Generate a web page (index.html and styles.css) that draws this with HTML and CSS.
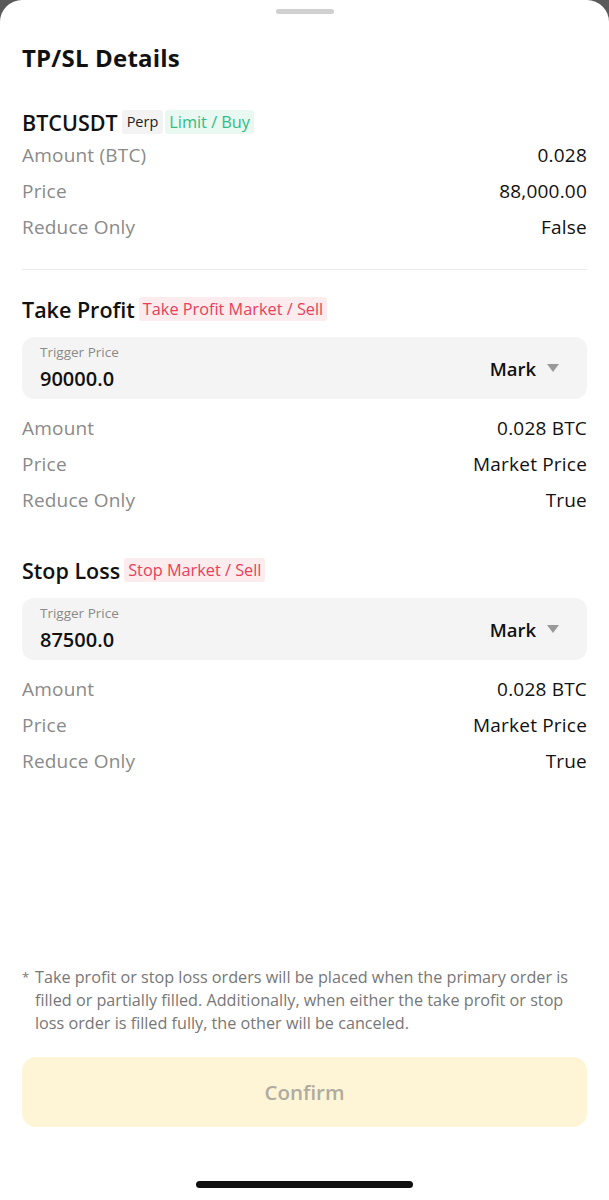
FILE: index.html
```html
<!DOCTYPE html>
<html>
<head>
<title>TP/SL Details</title>
<link rel="stylesheet" href="styles.css">
</head>
<body>
<div class="sheet">
  <div class="handle"></div>
  <h1 class="title">TP/SL Details</h1>

  <div class="section first">
    <div class="head">
      <span class="name">BTCUSDT</span>
      <span class="tag tag-gray">Perp</span>
      <span class="tag tag-green">Limit / Buy</span>
    </div>
    <div class="row"><span class="label">Amount (BTC)</span><span class="value">0.028</span></div>
    <div class="row"><span class="label">Price</span><span class="value">88,000.00</span></div>
    <div class="row"><span class="label">Reduce Only</span><span class="value">False</span></div>
  </div>

  <div class="divider"></div>

  <div class="section">
    <div class="head">
      <span class="name">Take Profit</span>
      <span class="tag tag-red">Take Profit Market / Sell</span>
    </div>
    <div class="trigger">
      <div class="trigger-left">
        <span class="trigger-label">Trigger Price</span>
        <span class="trigger-value">90000.0</span>
      </div>
      <div class="mark">Mark <span class="caret"></span></div>
    </div>
    <div class="row"><span class="label">Amount</span><span class="value">0.028 BTC</span></div>
    <div class="row"><span class="label">Price</span><span class="value">Market Price</span></div>
    <div class="row"><span class="label">Reduce Only</span><span class="value">True</span></div>
  </div>

  <div class="section stop">
    <div class="head">
      <span class="name">Stop Loss</span>
      <span class="tag tag-red">Stop Market / Sell</span>
    </div>
    <div class="trigger">
      <div class="trigger-left">
        <span class="trigger-label">Trigger Price</span>
        <span class="trigger-value">87500.0</span>
      </div>
      <div class="mark">Mark <span class="caret"></span></div>
    </div>
    <div class="row"><span class="label">Amount</span><span class="value">0.028 BTC</span></div>
    <div class="row"><span class="label">Price</span><span class="value">Market Price</span></div>
    <div class="row"><span class="label">Reduce Only</span><span class="value">True</span></div>
  </div>

  <div class="spacer"></div>

  <div class="note">
    <span class="star">*</span>
    <p>Take profit or stop loss orders will be placed when the primary order is filled or partially filled. Additionally, when either the take profit or stop loss order is filled fully, the other will be canceled.</p>
  </div>

  <button class="confirm">Confirm</button>
  <div class="home"></div>
</div>
</body>
</html>
```

FILE: styles.css
```css
body {
    margin: 0;
    padding: 0;
    background: #5a5a5a;
    font-family: "Open Sans", Lato, sans-serif;
}

.sheet {
    width: 609px;
    height: 1200px;
    background: #fff;
    border-radius: 22px 22px 0 0;
    display: flex;
    flex-direction: column;
    padding: 0 22px;
    box-sizing: border-box;
}

.handle {
    width: 58px;
    height: 5px;
    border-radius: 3px;
    background: #d0d0d0;
    margin: 9px auto 0;
}

.title {
    margin: 29px 0 0;
    font-size: 24px;
    font-weight: 700;
    color: #111;
    line-height: 30px;
    letter-spacing: 0.2px;
}

.section {
    margin-top: 24px;
}

.first {
    margin-top: 34px;
}

.stop {
    margin-top: 37px;
}

.head {
    display: flex;
    align-items: center;
    height: 30px;
}

.name {
    font-size: 21.5px;
    font-weight: 600;
    color: #111;
    margin-right: 4px;
}

.tag {
    font-size: 16.3px;
    padding: 1px 4px;
    border-radius: 3px;
    margin-right: 2px;
    line-height: 22px;
}

.tag-gray {
    background: #f3f3f3;
    color: #222;
    font-size: 14.5px;
    padding: 1px 5px;
}

.tag-green {
    background: #eaf8f2;
    color: #2fbd85;
}

.tag-red {
    background: #fdecee;
    color: #ea3e5b;
}

.row {
    display: flex;
    justify-content: space-between;
    align-items: center;
    height: 36px;
    font-size: 19px;
    letter-spacing: 0.2px;
}

.label {
    color: #8a8a8a;
}

.value {
    color: #111;
}

.divider {
    height: 1px;
    background: #ebebeb;
    margin-top: 24px;
}

.trigger {
    display: flex;
    justify-content: space-between;
    align-items: center;
    background: #f4f4f4;
    border-radius: 12px;
    height: 62px;
    padding: 0 28px 0 18px;
    margin: 13px 0 11px;
}

.trigger-left {
    display: flex;
    flex-direction: column;
}

.trigger-label {
    font-size: 13.5px;
    color: #8a8a8a;
    line-height: 16px;
}

.trigger-value {
    font-size: 20px;
    font-weight: 600;
    color: #111;
    line-height: 26px;
    margin-top: 6px;
}

.mark {
    display: flex;
    align-items: center;
    font-size: 18.5px;
    font-weight: 600;
    color: #111;
}

.caret {
    width: 0;
    height: 0;
    border-left: 6px solid transparent;
    border-right: 6px solid transparent;
    border-top: 8px solid #999;
    margin-left: 11px;
}

.spacer {
    flex: 1;
}

.note {
    display: flex;
    color: #777;
    font-size: 16.2px;
    line-height: 23px;
}

.star {
    width: 13px;
    flex-shrink: 0;
    font-size: 13px;
}

.note p {
    margin: 0;
}

.confirm {
    margin-top: 22px;
    height: 70px;
    border: none;
    border-radius: 14px;
    background: #fef5d6;
    color: #b0aba0;
    font-family: inherit;
    font-size: 20.5px;
    font-weight: 600;
}

.home {
    width: 217px;
    height: 7px;
    border-radius: 4px;
    background: #111;
    margin: 54px auto 12px;
}
```
